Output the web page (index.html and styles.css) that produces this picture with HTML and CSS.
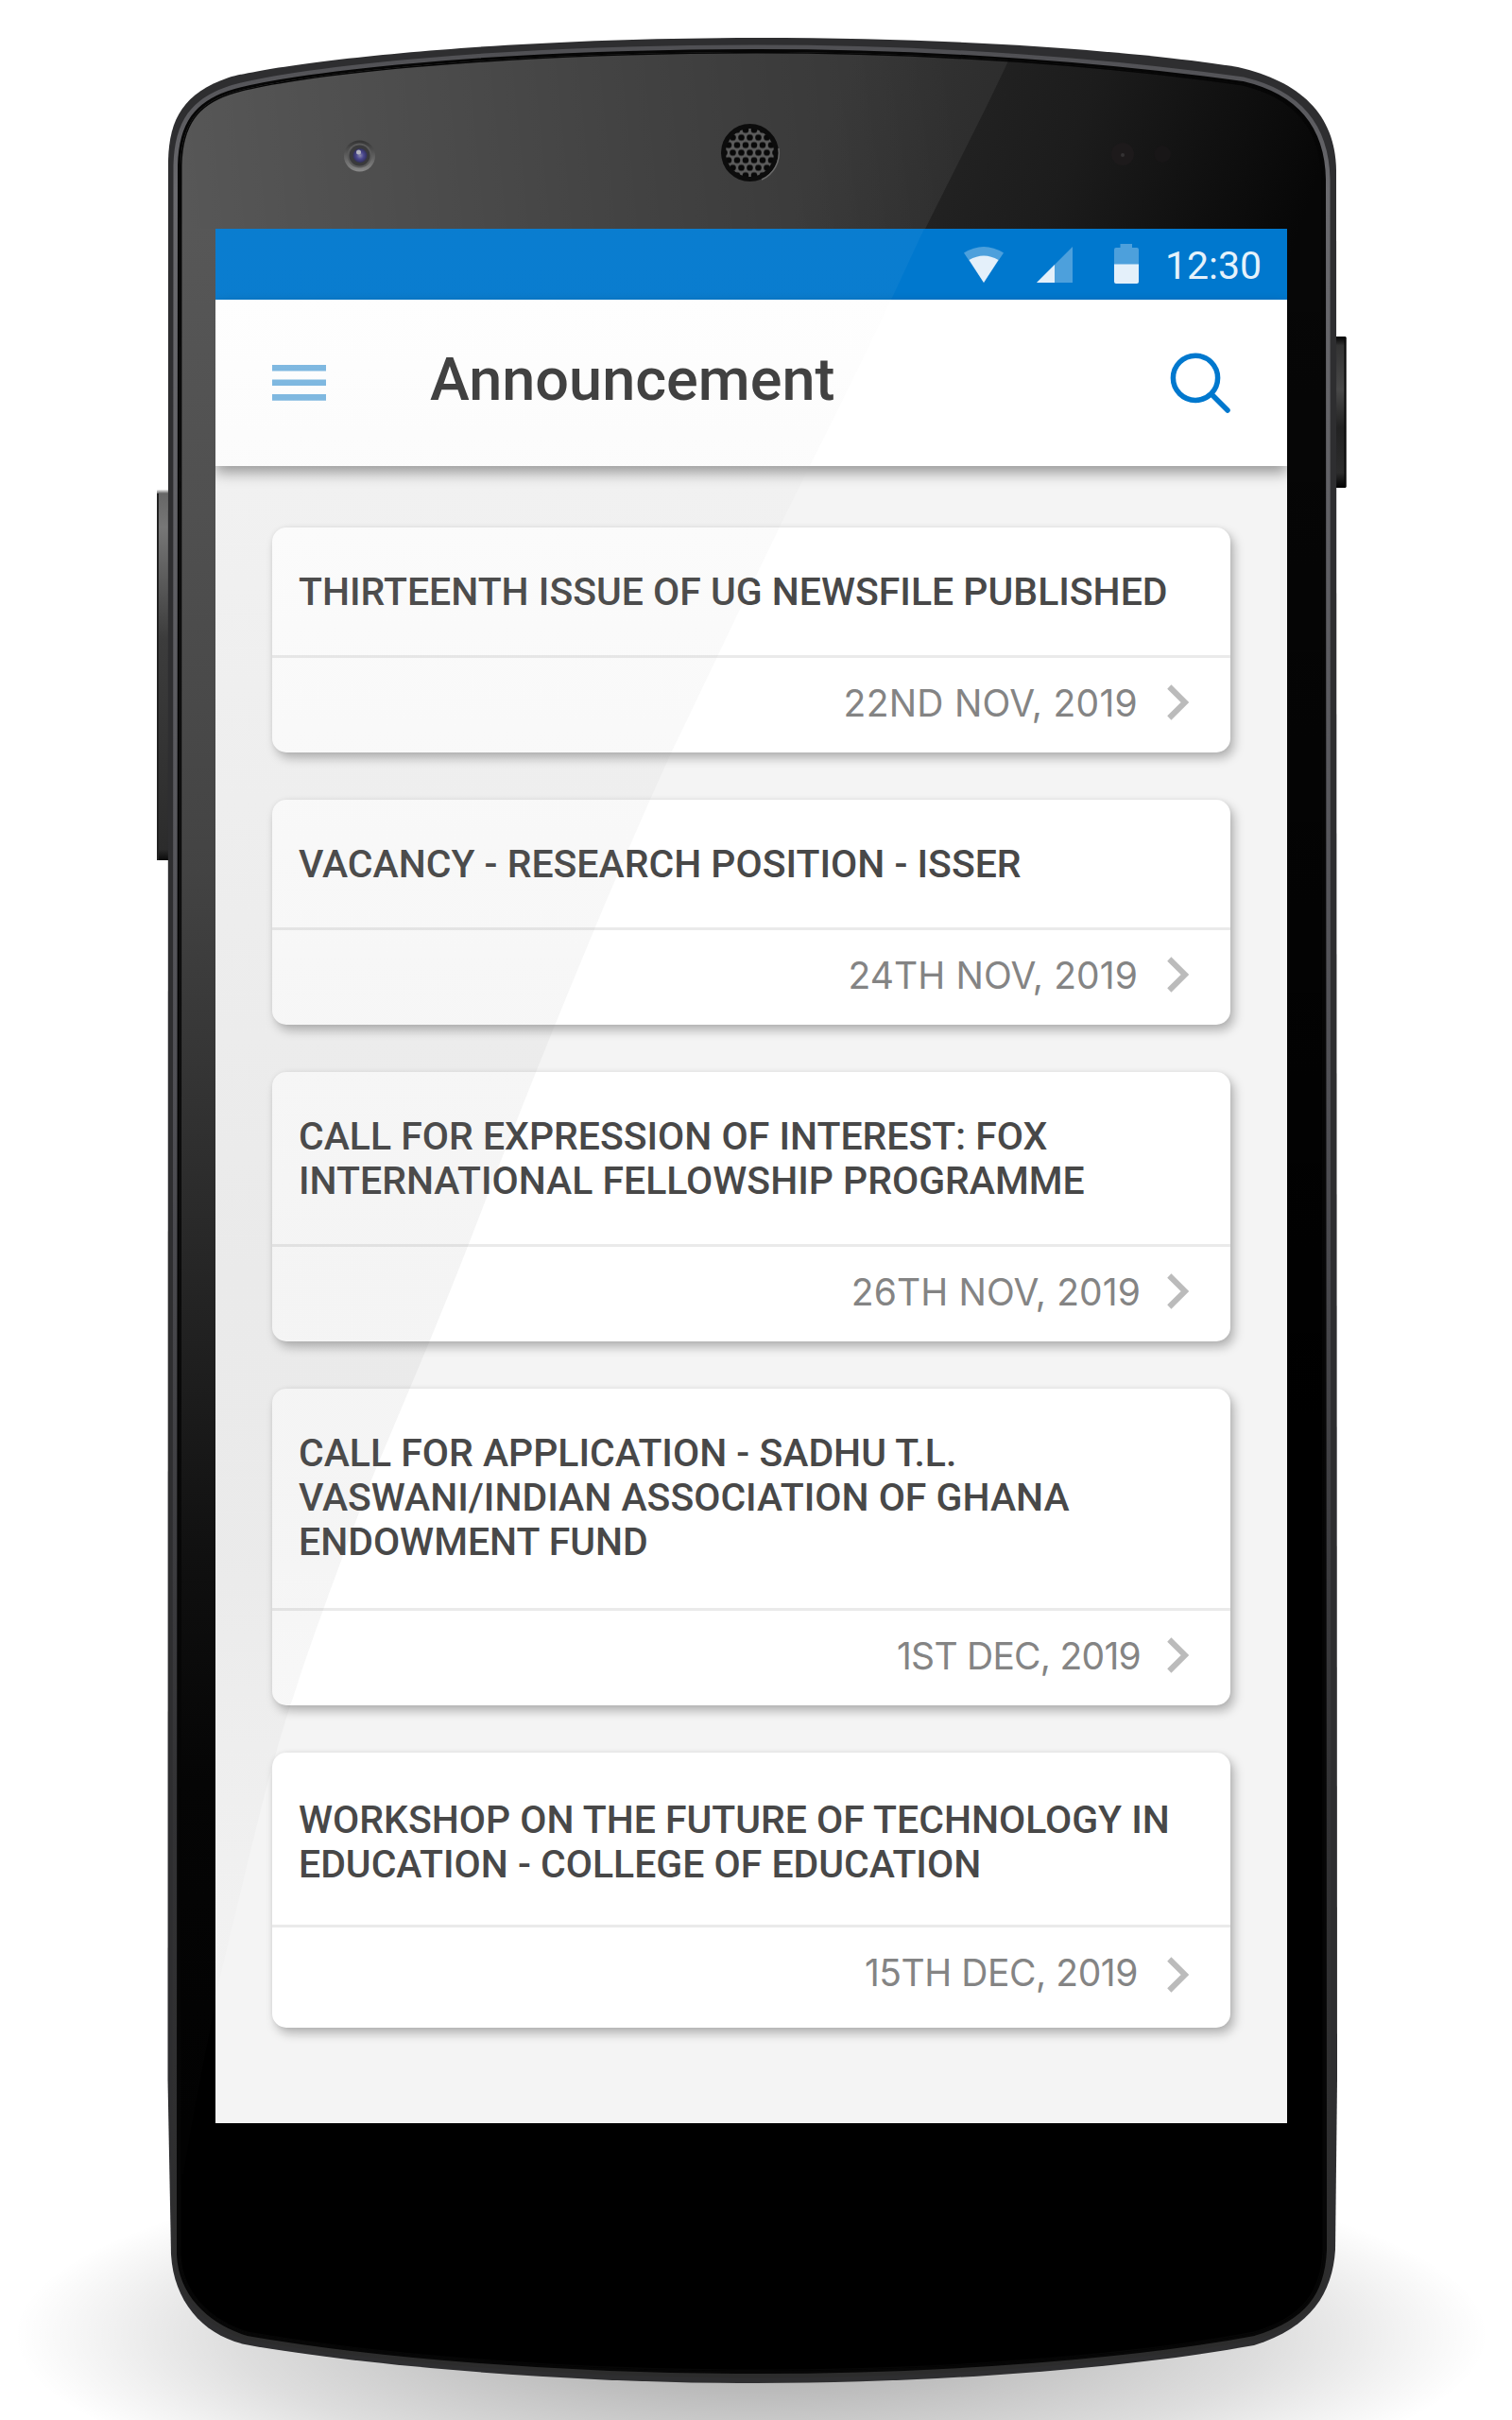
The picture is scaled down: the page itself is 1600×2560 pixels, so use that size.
FILE: index.html
```html
<!DOCTYPE html>
<html lang="en">
<head>
<meta charset="utf-8">
<title>Announcement</title>
<link rel="stylesheet" href="styles.css">
</head>
<body>
<div class="phone">
  <svg class="device" viewBox="0 0 1600 2560" aria-hidden="true">
    <defs>
      <radialGradient id="floor" gradientUnits="userSpaceOnUse" cx="0" cy="0" r="1" gradientTransform="translate(795 2470) scale(780 200)">
        <stop offset="0" stop-color="#000" stop-opacity=".36"/>
        <stop offset=".35" stop-color="#000" stop-opacity=".25"/>
        <stop offset=".7" stop-color="#000" stop-opacity=".13"/>
        <stop offset=".88" stop-color="#000" stop-opacity=".05"/>
        <stop offset="1" stop-color="#000" stop-opacity="0"/>
      </radialGradient>
      <linearGradient id="rim" x1="0" y1="0" x2="0" y2="1">
        <stop offset="0" stop-color="#505054"/>
        <stop offset=".06" stop-color="#6a6a6e"/>
        <stop offset=".45" stop-color="#505055"/>
        <stop offset=".75" stop-color="#333335"/>
        <stop offset="1" stop-color="#2c2c2c"/>
      </linearGradient>
      <linearGradient id="glass" gradientUnits="userSpaceOnUse" x1="900" y1="60" x2="1380" y2="230">
        <stop offset="0" stop-color="#282828"/>
        <stop offset=".5" stop-color="#1c1c1c"/>
        <stop offset="1" stop-color="#070707"/>
      </linearGradient>
      <linearGradient id="glassFade" gradientUnits="userSpaceOnUse" x1="0" y1="240" x2="0" y2="1500">
        <stop offset="0" stop-color="#000" stop-opacity="0"/>
        <stop offset="1" stop-color="#000"/>
      </linearGradient>
      <linearGradient id="sheen" gradientUnits="userSpaceOnUse" x1="190" y1="200" x2="1010" y2="120">
        <stop offset="0" stop-color="#fff" stop-opacity=".22"/>
        <stop offset=".6" stop-color="#fff" stop-opacity=".12"/>
        <stop offset="1" stop-color="#fff" stop-opacity=".06"/>
      </linearGradient>
      <linearGradient id="side" gradientUnits="userSpaceOnUse" x1="0" y1="242" x2="0" y2="2246">
        <stop offset="0" stop-color="#575757"/>
        <stop offset=".15" stop-color="#505050"/>
        <stop offset=".34" stop-color="#434343"/>
        <stop offset=".52" stop-color="#2a2a2a"/>
        <stop offset=".7" stop-color="#101010"/>
        <stop offset=".82" stop-color="#050505"/>
        <stop offset="1" stop-color="#020202"/>
      </linearGradient>
      <linearGradient id="keyLeft" x1="0" y1="0" x2="0" y2="1">
        <stop offset="0" stop-color="#eee"/>
        <stop offset=".01" stop-color="#666"/>
        <stop offset=".1" stop-color="#777"/>
        <stop offset=".4" stop-color="#3c3c3c"/>
        <stop offset=".97" stop-color="#2c2c2c"/>
        <stop offset="1" stop-color="#0a0a0a"/>
      </linearGradient>
      <linearGradient id="keyRight" x1="0" y1="0" x2="0" y2="1">
        <stop offset="0" stop-color="#000"/>
        <stop offset=".06" stop-color="#333"/>
        <stop offset=".35" stop-color="#484848"/>
        <stop offset=".6" stop-color="#222"/>
        <stop offset=".9" stop-color="#2c2c2c"/>
        <stop offset="1" stop-color="#000"/>
      </linearGradient>
      <radialGradient id="lens">
        <stop offset="0" stop-color="#8a8aa8"/>
        <stop offset=".5" stop-color="#4a4790"/>
        <stop offset="1" stop-color="#32315a"/>
      </radialGradient>
      <linearGradient id="bezel" x1="0" y1="0" x2="0" y2="1">
        <stop offset="0" stop-color="#333"/>
        <stop offset="1" stop-color="#8a8a8a"/>
      </linearGradient>
      <pattern id="mesh" width="9" height="16" patternUnits="userSpaceOnUse" patternTransform="translate(789 153.500)">
        <rect width="9" height="16" fill="#5c5c5c"/>
        <circle cx="4.500" cy="8" r="3.300" fill="#090909"/>
        <circle cx="0" cy="0" r="3.300" fill="#090909"/>
        <circle cx="9" cy="0" r="3.300" fill="#090909"/>
        <circle cx="0" cy="16" r="3.300" fill="#090909"/>
        <circle cx="9" cy="16" r="3.300" fill="#090909"/>
      </pattern>
      <path id="front" d="M191 175C192 130 210 110 242 99C300 80 520 55 800 55C1000 55 1180 70 1315 89C1370 102 1399 135 1400 190L1401 2380C1399 2425 1380 2452 1327 2468C1200 2492 1000 2508 800 2508C600 2508 400 2492 262 2468C220 2455 192 2425 190 2385Z"/>
      <clipPath id="frontClip"><use href="#front"/></clipPath>
      <clipPath id="glare"><path d="M0 0H1096C1044 120 1000 195 943 317C890 430 850 505 820 568C780 650 740 735 710 797C640 950 560 1150 506 1290C460 1410 420 1500 392 1568C350 1680 330 1735 310 1796C285 1870 265 1960 245 2041C225 2130 205 2230 194 2300H0Z"/></clipPath>
    </defs>
    <rect y="2250" width="1600" height="310" fill="url(#floor)"/>
    <rect x="166" y="518" width="16" height="392" rx="1" fill="url(#keyLeft)"/>
    <path d="M167 522V910" stroke="#222" stroke-width="2"/>
    <rect x="1410" y="356" width="14.500" height="160" rx="1" fill="url(#keyRight)"/>
    <path d="M1423.500 357V515" stroke="#0a0a0a" stroke-width="2"/>
    <path fill="#2e2e30" d="M178 170C179 125 195 98 242 82C300 66 520 40 800 40C1050 40 1230 58 1310 71C1375 86 1413 120 1414 180L1415 2200L1413 2380C1410 2425 1388 2462 1327 2481C1200 2504 1000 2521 800 2521C600 2521 380 2502 259 2480C215 2470 184 2435 181 2385L177.500 2200Z"/>
    <use href="#front" fill="none" stroke="url(#rim)" stroke-width="15"/>
    <use href="#front" fill="none" stroke="#060606" stroke-width="6"/>
    <g clip-path="url(#frontClip)">
      <rect x="180" y="40" width="1230" height="2480" fill="url(#glass)"/>
      <rect x="180" y="40" width="1230" height="2480" fill="url(#glassFade)"/>
      <g clip-path="url(#glare)">
        <rect x="180" y="40" width="1000" height="202" fill="url(#sheen)"/>
        <rect x="180" y="242" width="50" height="2100" fill="url(#side)"/>
      </g>
      <use href="#front" fill="none" stroke="#060606" stroke-width="3"/>
    </g>
    <circle cx="380.500" cy="165" r="16.500" fill="url(#bezel)"/>
    <circle cx="380.500" cy="164.500" r="13" fill="#5a5a5a"/>
    <circle cx="380.500" cy="164.500" r="11" fill="#3a3a3c"/>
    <circle cx="381" cy="164.500" r="7.500" fill="url(#lens)"/>
    <circle cx="379.500" cy="161" r="2.500" fill="#b4b4c0"/>
    <circle cx="793.500" cy="161.500" r="30.500" fill="#0c0c0c"/>
    <path d="M806 190A31 31 0 0 0 824 157" fill="none" stroke="#6a6a6a" stroke-width="1.500"/>
    <circle cx="793.500" cy="161.500" r="25.500" fill="url(#mesh)"/>
    <circle cx="1188" cy="163" r="12" fill="#1d1a1b"/>
    <circle cx="1188" cy="164" r="2" fill="#343233"/>
    <circle cx="1230" cy="163" r="9" fill="#181617"/>
  </svg>

  <main class="screen">
    <div class="status">
      <svg class="wifi" width="42" height="38" viewBox="0 0 42 38" aria-hidden="true">
        <path d="M0 6.500Q21-6.500 42 6.500L21 38Z" fill="#4da0dc"/>
        <path d="M5.500 14Q21 5 36.500 14L21 38Z" fill="#e4f0fa"/>
      </svg>
      <svg class="signal" width="38" height="38" viewBox="0 0 38 38" aria-hidden="true">
        <path d="M0 38L38 0V38Z" fill="#4da0dc"/>
        <path d="M0 38L19 19V38Z" fill="#e4f0fa"/>
      </svg>
      <svg class="battery" width="26" height="42" viewBox="0 0 26 42" aria-hidden="true">
        <path d="M6.500 0H19V4H24Q26 4 26 6V22H0V6Q0 4 2 4H6.500Z" fill="#4da0dc"/>
        <path d="M0 21.500H26V40Q26 42 24 42H2Q0 42 0 40Z" fill="#e4f0fa"/>
      </svg>
      <span class="clock">12:30</span>
    </div>
    <header class="appbar">
      <svg class="menu" width="57" height="38" viewBox="0 0 57 38" aria-hidden="true">
        <path d="M0 3.300H57M0 18.700H57M0 34.400H57" stroke="#7bb7e1" stroke-width="6.600"/>
      </svg>
      <h1>Announcement</h1>
      <svg class="search" width="64" height="64" viewBox="0 0 64 64" aria-hidden="true" fill="none" stroke="#0078ce" stroke-width="5.500" stroke-linecap="round">
        <circle cx="27" cy="26.800" r="23.600"/>
        <path d="M44 44L61 61"/>
      </svg>
    </header>
    <section class="list">
      <article class="card">
        <h2>THIRTEENTH ISSUE OF UG NEWSFILE PUBLISHED</h2>
        <div class="foot"><time class="d1">22ND NOV, 2019</time><svg width="23" height="38" viewBox="0 0 23 38"><path d="M2.300 2.500L19 19L2.300 35.500" /></svg></div>
      </article>
      <article class="card">
        <h2>VACANCY - RESEARCH POSITION - ISSER</h2>
        <div class="foot"><time class="d2">24TH NOV, 2019</time><svg width="23" height="38" viewBox="0 0 23 38"><path d="M2.300 2.500L19 19L2.300 35.500" /></svg></div>
      </article>
      <article class="card two">
        <h2>CALL FOR EXPRESSION OF INTEREST: FOX<br>INTERNATIONAL FELLOWSHIP PROGRAMME</h2>
        <div class="foot near"><time class="d2">26TH NOV, 2019</time><svg width="23" height="38" viewBox="0 0 23 38"><path d="M2.300 2.500L19 19L2.300 35.500" /></svg></div>
      </article>
      <article class="card three">
        <h2>CALL FOR APPLICATION - SADHU T.L.<br>VASWANI/INDIAN ASSOCIATION OF GHANA<br>ENDOWMENT FUND</h2>
        <div class="foot near"><time class="d4">1ST DEC, 2019</time><svg width="23" height="38" viewBox="0 0 23 38"><path d="M2.300 2.500L19 19L2.300 35.500" /></svg></div>
      </article>
      <article class="card last">
        <h2>WORKSHOP ON THE FUTURE OF TECHNOLOGY IN<br>EDUCATION - COLLEGE OF EDUCATION</h2>
        <div class="foot"><time class="d5">15TH DEC, 2019</time><svg width="23" height="38" viewBox="0 0 23 38"><path d="M2.300 2.500L19 19L2.300 35.500" /></svg></div>
      </article>
    </section>
    <div class="reflection"></div>
  </main>
</div>
</body>
</html>
```
FILE: styles.css
```css
* { box-sizing: border-box; }

body {
  margin: 0;
  background: #fff;
  font-family: Roboto, sans-serif;
}

svg { display: block; flex: none; }

.phone {
  position: relative;
  width: 1600px;
  height: 2560px;
  padding: 242px 238px 0 228px;
  overflow: hidden;
}

.device {
  position: absolute;
  inset: 0;
  width: 1600px;
  height: 2560px;
}

.screen {
  position: relative;
  width: 1134px;
  height: 2004px;
  background: #f4f4f4;
  overflow: hidden;
}

.status {
  display: flex;
  height: 75px;
  padding: 16px 28px 0 792px;
  background: #0078ce;
}

.wifi { margin-top: 3px; }
.signal { margin: 3px 0 0 35px; }
.battery { margin-left: 44px; }

.clock {
  margin: -1px 0 0 28px;
  color: #e6f2fb;
  font-size: 41px;
  line-height: 48px;
  white-space: nowrap;
}

.appbar {
  position: relative;
  display: flex;
  height: 176px;
  padding-left: 60px;
  background: #fff;
  box-shadow: 0 7px 14px rgba(0, 0, 0, .38);
}

.menu { margin-top: 69px; }

h1 {
  flex: none;
  width: 783px;
  margin: 48px 0 0 110px;
  color: #3a3a3a;
  font-size: 63px;
  font-weight: 500;
  line-height: 74px;
}

.search { margin-top: 56px; }

.list {
  display: flex;
  flex-direction: column;
  gap: 50px;
  padding: 65px 60px 0;
}

.card {
  height: 238px;
  border-radius: 15px;
  background: #fff;
  box-shadow: 4px 6px 11px rgba(0, 0, 0, .27), 0 0 5px rgba(0, 0, 0, .06);
}

.card.two { height: 285px; }
.card.three { height: 335px; }
.card.last { height: 291px; }

h2 {
  height: 135px;
  margin: 0;
  padding: 45px 0 0 28px;
  color: #484848;
  font-size: 40.95px;
  font-weight: 500;
  line-height: 47px;
  white-space: nowrap;
}

.two h2 { height: 182px; }
.three h2 { height: 232px; }
.last h2 { height: 182px; padding-top: 48px; }

.foot {
  display: flex;
  justify-content: flex-end;
  gap: 31px;
  padding: 28px 44px 0 0;
  border-top: 3px solid #eaeaea;
}

.foot.near { gap: 28px; }
.last .foot { padding-top: 31px; }

.foot path {
  fill: none;
  stroke: #bbb;
  stroke-width: 6;
}

time {
  margin-top: -4px;
  color: #848484;
  font-family: Inter, sans-serif;
  font-size: 39px;
  font-weight: 400;
  line-height: 47px;
  white-space: nowrap;
}

.d1 { letter-spacing: .26px; }
.d2 { letter-spacing: .1px; }
.d4 { letter-spacing: -.75px; }
.d5 { letter-spacing: -.45px; }

.last time { margin-top: -7px; }

.reflection {
  position: absolute;
  inset: 0;
  background: linear-gradient(rgba(255, 255, 255, .04), rgba(190, 190, 190, .05) 12%, rgba(150, 150, 150, .055) 25%, rgba(110, 110, 110, .075) 55%, rgba(110, 110, 110, .07) 70%, rgba(110, 110, 110, .02) 90%);
  clip-path: path("M0 0H750C738 25 727 50 715 75C662 188 622 263 592 326C552 408 512 493 482 555C412 708 332 908 278 1048C232 1168 192 1258 164 1326C122 1438 102 1493 82 1554C57 1628 37 1718 17 1799L0 1870Z");
}
```
